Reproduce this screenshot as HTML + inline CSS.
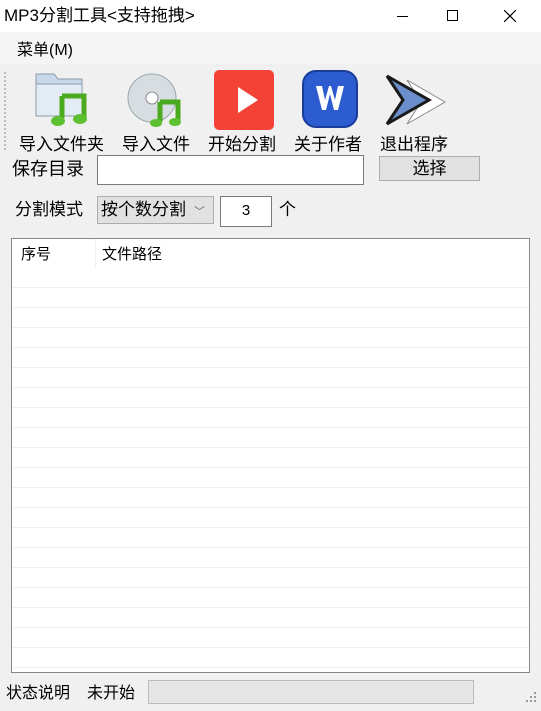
<!DOCTYPE html><html><head><meta charset="utf-8"><style>
*{margin:0;padding:0;box-sizing:border-box}
body{width:541px;height:711px;background:#f0f0f0;font-family:"Liberation Sans","Noto Sans CJK SC",sans-serif;position:relative;overflow:hidden;color:#000}
.a{position:absolute}
.t{font-size:17px;white-space:nowrap;line-height:20px}
</style></head><body>
<div class="a" style="left:0;top:0;width:541px;height:32px;background:#fff"></div>
<div class="a t" style="left:4px;top:6px;font-size:17px">MP3分割工具&lt;支持拖拽&gt;</div>
<div class="a" style="left:397px;top:16px;width:11px;height:1px;background:#000"></div>
<div class="a" style="left:447px;top:10px;width:11px;height:11px;border:1px solid #000"></div>
<svg class="a" style="left:504px;top:10px" width="12" height="12"><path d="M0 0L12 12M12 0L0 12" stroke="#000" stroke-width="1.2"/></svg>
<div class="a" style="left:0;top:32px;width:541px;height:32px;background:#f5f5f5"></div>
<div class="a t" style="left:17px;top:41px;font-size:16px">菜单(M)</div>
<div class="a" style="left:4px;top:72px;height:78px;border-left:2px dotted #bbb"></div>
<svg class="a" style="left:32px;top:70px" width="62" height="60" viewBox="0 0 62 60">
<path d="M4 4h18l4 5h24v36H4z" fill="#c8d8e8" stroke="#8a9aaa"/><path d="M4 14h46v32H4z" fill="#e3ecf5" stroke="#8a9aaa"/>
<path d="M30 26h22v22" fill="none" stroke="#4caa20" stroke-width="5"/><path d="M30 26v22" stroke="#4caa20" stroke-width="5"/>
<ellipse cx="26" cy="51" rx="7" ry="5" fill="#5cc030"/><ellipse cx="48" cy="49" rx="7" ry="5" fill="#5cc030"/></svg>
<svg class="a" style="left:126px;top:70px" width="62" height="60" viewBox="0 0 62 60">
<circle cx="26" cy="28" r="24" fill="#d8dde2" stroke="#9aa"/><circle cx="26" cy="28" r="6" fill="#fff" stroke="#888"/>
<path d="M34 32h18v20M34 32v20" fill="none" stroke="#4caa20" stroke-width="5"/><ellipse cx="30" cy="53" rx="6" ry="4" fill="#5cc030"/><ellipse cx="49" cy="52" rx="6" ry="4" fill="#5cc030"/></svg>
<div class="a" style="left:214px;top:70px;width:60px;height:60px;background:#f44336;border-radius:5px"></div>
<svg class="a" style="left:214px;top:70px" width="60" height="60"><path d="M24 17v26l20-13z" fill="#fff"/></svg>
<div class="a" style="left:302px;top:70px;width:56px;height:58px;background:#2d5bd0;border-radius:14px;border:2px solid #1a3c9a"></div>
<svg class="a" style="left:302px;top:70px" width="56" height="58"><path d="M14 16l6 24h4l4-16 4 16h4l6-24h-6l-3 14-4-14h-2l-4 14-3-14z" fill="#fff"/></svg>
<svg class="a" style="left:385px;top:72px" width="62" height="56" viewBox="0 0 62 56">
<path d="M22 8l38 22-38 22 14-22z" fill="#fff" stroke="#888"/><path d="M2 4l42 24L2 52l16-24z" fill="#6a8fcc" stroke="#1a1a1a" stroke-width="3"/></svg>
<div class="a t" style="left:19px;top:135px">导入文件夹</div>
<div class="a t" style="left:122px;top:135px">导入文件</div>
<div class="a t" style="left:208px;top:135px">开始分割</div>
<div class="a t" style="left:294px;top:135px">关于作者</div>
<div class="a t" style="left:380px;top:135px">退出程序</div>
<div class="a t" style="left:12px;top:159px;font-size:18px">保存目录</div>
<div class="a" style="left:97px;top:155px;width:267px;height:30px;background:#fff;border:1px solid #7a7a7a"></div>
<div class="a" style="left:379px;top:156px;width:101px;height:25px;background:#e1e1e1;border:1px solid #adadad;text-align:center;font-size:17px;line-height:23px">选择</div>
<div class="a t" style="left:15px;top:200px;font-size:17px">分割模式</div>
<div class="a" style="left:97px;top:196px;width:117px;height:28px;background:#e1e1e1;border:1px solid #adadad;font-size:17px;line-height:26px;padding-left:3px;white-space:nowrap">按个数分割<span style="font-size:11px;color:#666;margin-left:8px">﹀</span></div>
<div class="a" style="left:220px;top:196px;width:52px;height:31px;background:#fff;border:1px solid #7a7a7a;text-align:center;font-size:15px;line-height:28px">3</div>
<div class="a t" style="left:279px;top:200px;font-size:17px">个</div>
<div class="a" style="left:11px;top:238px;width:519px;height:435px;background:#fff;border:1px solid #828790;overflow:hidden">
<div class="a" style="left:83px;top:0;width:1px;height:440px;background:#f0f0f0"></div>
<div class="a t" style="left:9px;top:6px;font-size:15px">序号</div>
<div class="a t" style="left:90px;top:6px;font-size:15px">文件路径</div>
<div class="a" style="left:0;top:29px;width:520px;height:410px;background:repeating-linear-gradient(#fff 0 19px,#f0f0f0 19px 20px)"></div>
</div>
<div class="a t" style="left:6px;top:684px;font-size:16px">状态说明</div>
<div class="a t" style="left:87px;top:684px;font-size:16px">未开始</div>
<div class="a" style="left:148px;top:680px;width:326px;height:24px;background:#e6e6e6;border:1px solid #bcbcbc"></div>
<svg class="a" style="left:524px;top:690px" width="14" height="14"><g fill="#999"><rect x="10" y="2" width="2" height="2"/><rect x="6" y="6" width="2" height="2"/><rect x="10" y="6" width="2" height="2"/><rect x="2" y="10" width="2" height="2"/><rect x="6" y="10" width="2" height="2"/><rect x="10" y="10" width="2" height="2"/></g></svg>
</body></html>
